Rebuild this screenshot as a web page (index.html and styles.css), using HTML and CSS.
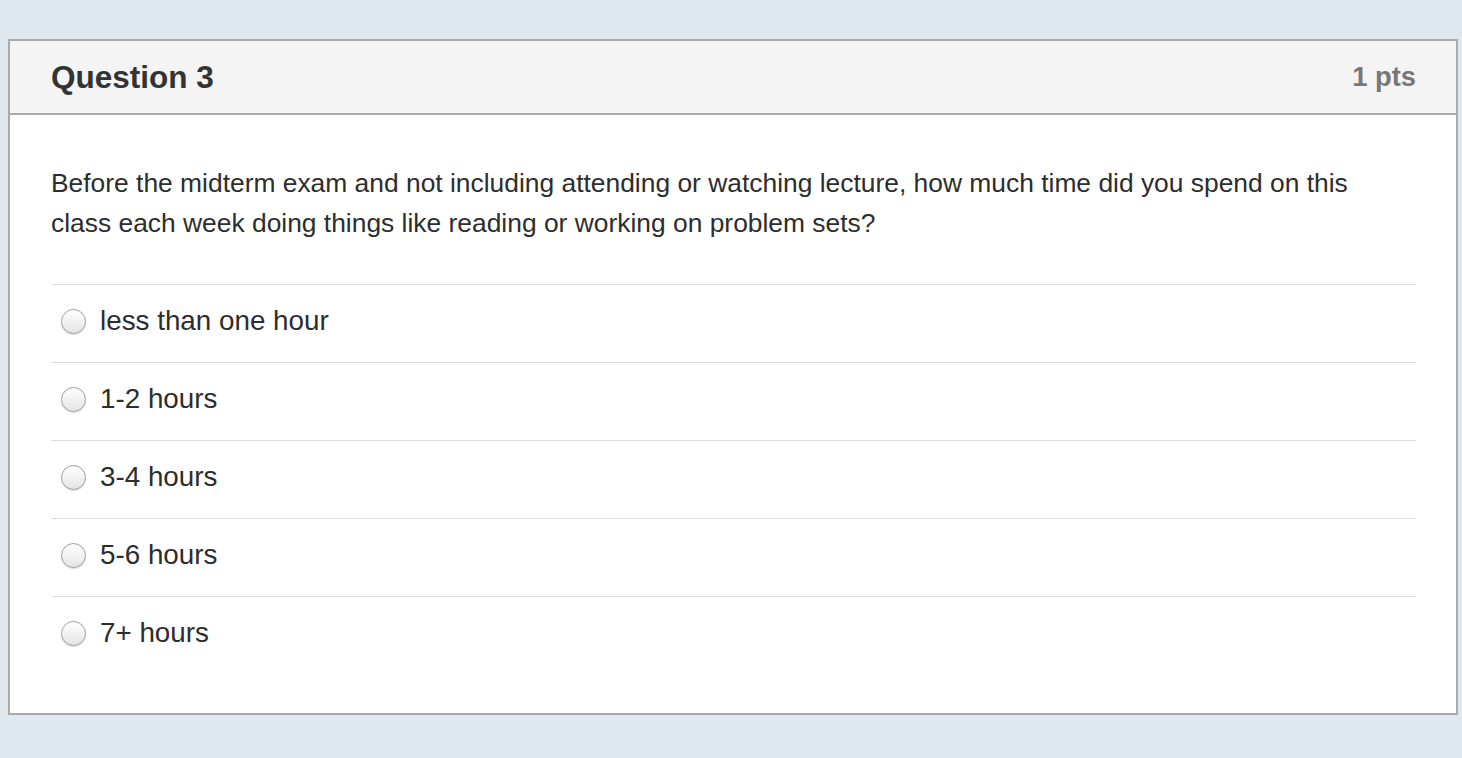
FILE: index.html
```html
<!DOCTYPE html>
<html lang="en">
<head>
  <meta charset="UTF-8">
  <title>Question 3</title>
  <link rel="stylesheet" href="styles.css">
</head>
<body>
  <div class="question">
    <div class="header">
      <span class="title">Question 3</span>
      <span class="points">1 pts</span>
    </div>
    <div class="body">
      <p class="text">Before the midterm exam and not including attending or watching lecture, how much time did you spend on this class each week doing things like reading or working on problem sets?</p>
      <div class="answers">
        <label class="answer"><span class="radio"></span>less than one hour</label>
        <label class="answer"><span class="radio"></span>1-2 hours</label>
        <label class="answer"><span class="radio"></span>3-4 hours</label>
        <label class="answer"><span class="radio"></span>5-6 hours</label>
        <label class="answer"><span class="radio"></span>7+ hours</label>
      </div>
    </div>
  </div>
</body>
</html>
```

FILE: styles.css
```css
body {
  margin: 0;
  padding: 39px 4px 0 8px;
  background-color: #dfe8ef;
  font-family: "Liberation Sans", Arial, sans-serif;
  color: #2d3b45;
  height: 758px;
  box-sizing: border-box;
}

.question {
  width: 1450px;
  box-sizing: border-box;
  border: 2px solid #aaaaaa;
  background-color: #fff;
}

.header {
  display: flex;
  justify-content: space-between;
  align-items: center;
  height: 72px;
  padding: 0 40px 0 41px;
  background-color: #f4f4f4;
  border-bottom: 2px solid #aaaaaa;
}

.title {
  font-size: 31.5px;
  font-weight: bold;
  color: #333;
}

.points {
  font-size: 27.3px;
  font-weight: bold;
  color: #777;
}

.body {
  padding: 48px 40px 39px 41px;
}

.text {
  max-width: 1330px;
  margin: 0 0 41px 0;
  font-size: 26.4px;
  line-height: 40px;
  color: #2d2d2d;
}

.answer {
  display: flex;
  align-items: center;
  height: 78px;
  padding-bottom: 5px;
  box-sizing: border-box;
  border-top: 1px solid #dcdcdc;
  font-size: 27.8px;
  color: #2d2d2d;
}

.radio {
  width: 23px;
  height: 23px;
  margin: 0 14px 0 10px;
  border-radius: 50%;
  border: 1px solid #a0a0a0;
  background: linear-gradient(#ffffff, #e4e4e4);
  box-shadow: 0 1px 1px rgba(0, 0, 0, 0.15);
}
```
